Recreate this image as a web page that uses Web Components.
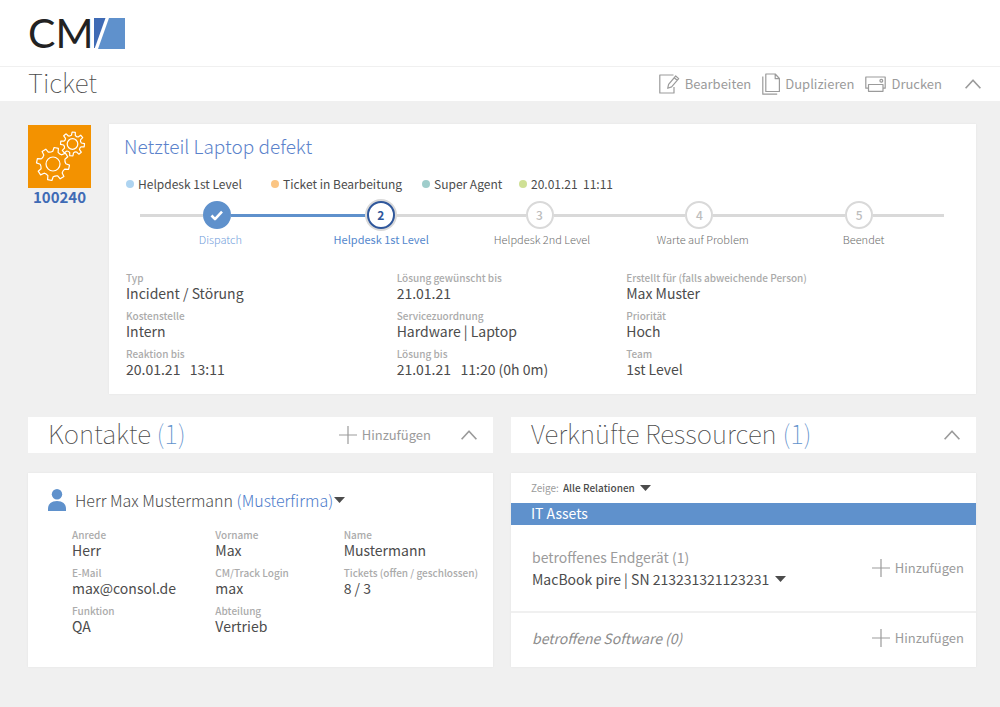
<!DOCTYPE html>
<html lang="de">
<head>
<meta charset="utf-8">
<meta name="viewport" content="width=device-width, initial-scale=1">
<title>Ticket 100240</title>
<style>
  :root {
    --blue: #5f91cc;
    --blue-dark: #3f6bb5;
    --link: #5b82cb;
    --text: #4c4c4c;
    --muted: #9b9b9b;
    --label: #ababab;
    --line: #d9d9d9;
    --page: #f0f0f0;
  }
  body {
    margin: 0;
    background: var(--page);
    color: var(--text);
    font: 14px/18px "Noto Sans CJK SC", "Noto Sans", sans-serif;
  }
</style>
</head>
<body>
<cm-app></cm-app>

<script>
const define = (name, html, setup) => {
  const template = document.createElement('template');
  template.innerHTML = html;
  customElements.define(name, class extends HTMLElement {
    constructor() {
      super();
      this.attachShadow({ mode: 'open' }).append(template.content.cloneNode(true));
    }
    connectedCallback() {
      if (setup && !this.ready) setup(this, this.shadowRoot);
      this.ready = true;
    }
  });
};

/* Outline of a gear wheel with rounded teeth */
const gear = (cx, cy, outer, inner, teeth, turn) => {
  const step = Math.PI * 2 / teeth;
  const at = (r, a) => (cx + r * Math.cos(a)).toFixed(1) + ' ' + (cy + r * Math.sin(a)).toFixed(1);
  let d = '';
  for (let i = 0; i < teeth; i++) {
    const a = turn + i * step;
    d += (i ? 'L' : 'M') + at(inner, a - step * .27) + 'L' + at(outer, a - step * .17)
       + 'L' + at(outer, a + step * .17) + 'L' + at(inner, a + step * .27)
       + 'Q' + at(inner - 1, a + step * .5) + ' ' + at(inner, a + step * .73);
  }
  return d + 'Z';
};

const ICONS = {
  edit: [21, 20, '<path d="M14.5 1H.8v18H15v-6"/><path d="M8.7 14.3l.9-4L16.7 2l3 2.6-7.1 8.3zM15.2 3.8l3 2.5"/>'],
  copy: [18, 22, '<path d="M3.8 1h9.4l4.2 4.5v13H3.8zM13.2 1v4.7h4.2M.8 3.5v17.7h14.4"/>'],
  print: [21, 16, '<path d="M3.3 12.2H.8V1h19.4v11.2h-2.2"/><path d="M3.5 8.5h14.5v6.8H3.5z"/><circle cx="16.3" cy="4.8" r="1.4"/>'],
  up: [16, 10, '<path d="M.6 9.3L8 1.2l7.4 8.1" stroke-width="1.7"/>'],
  plus: [18, 18, '<path d="M9 0v18M0 9h18"/>'],
  down: [11, 6, '<path d="M0 0h11L5.5 6z" fill="currentColor" stroke="none"/>'],
  check: [14, 11, '<path d="M1.5 5.5l3.5 3.6 7-7.5" stroke-width="2.6"/>'],
  user: [18, 22, '<g fill="currentColor" stroke="none"><circle cx="9" cy="5.2" r="5.2"/><path d="M0 22v-2.5C0 15 3.5 12 9 12s9 3 9 7.5V22z"/></g>'],
  gears: [63, 63, `<path d="${gear(25, 39, 16.5, 12.8, 8, .2)}"/><circle cx="25" cy="39" r="7"/>
    <path d="${gear(44.5, 19, 12, 9, 8, .1)}"/><circle cx="44.5" cy="19" r="5.3"/>`]
};

define('cm-icon', `
  <style>
    :host { display: inline-flex; flex: none; }
    svg { display: block; fill: none; stroke: currentColor; stroke-width: 1.2; stroke-linejoin: round; }
  </style>
  <svg aria-hidden="true"></svg>`, (host, root) => {
  const [w, h, body] = ICONS[host.getAttribute('name')];
  const svg = root.querySelector('svg');
  svg.setAttribute('width', w);
  svg.setAttribute('height', h);
  svg.setAttribute('viewBox', `0 0 ${w} ${h}`);
  svg.innerHTML = body;
});

define('cm-action', `
  <style>
    :host { display: inline-flex; }
    button {
      display: flex; align-items: center; gap: 5px; padding: 0; border: 0;
      background: none; color: var(--action-color, var(--muted));
      font: inherit; font-size: 13px; line-height: 20px; cursor: pointer; white-space: nowrap;
    }
  </style>
  <button type="button"><slot></slot></button>`, (host, root) => {
  const button = root.querySelector('button');
  const icon = document.createElement('cm-icon');
  icon.setAttribute('name', host.getAttribute('icon'));
  button.prepend(icon);
  if (host.hasAttribute('hint')) button.setAttribute('aria-label', host.getAttribute('hint'));
});

define('cm-logo', `
  <style>
    :host { display: flex; align-items: center; gap: 1px; color: #222; }
    span { font: 41px/44px Lato, sans-serif; }
    svg { display: block; }
  </style>
  <span>CM</span>
  <svg width="31" height="31" viewBox="0 0 31 31" aria-hidden="true">
    <path fill="#3f6bb5" d="M0 0h11.5L.8 30H0z"/><path fill="#5f91cc" d="M15 0h16v31H4z"/>
  </svg>`);

define('cm-header', `
  <style>
    :host { display: block; background: #fff; }
    .brand { display: flex; align-items: center; height: 66px; padding: 0 28px; border-bottom: 1px solid var(--page); }
    .bar { display: flex; align-items: center; justify-content: space-between; height: 34px; padding: 0 19px 0 28px; }
    h1 { margin: 0; padding-bottom: 4px; font-size: 26px; line-height: 30px; font-weight: 100; }
    nav { display: flex; align-items: center; gap: 11px; }
    .fold { margin-left: 12px; }
  </style>
  <div class="brand"><cm-logo></cm-logo></div>
  <div class="bar">
    <h1>Ticket</h1>
    <nav>
      <cm-action icon="edit">Bearbeiten</cm-action>
      <cm-action icon="copy">Duplizieren</cm-action>
      <cm-action icon="print">Drucken</cm-action>
      <cm-action class="fold" icon="up" hint="Einklappen"></cm-action>
    </nav>
  </div>`);

define('cm-card', `
  <style>
    :host { display: block; background: #fff; box-shadow: 0 0 2px rgba(0, 0, 0, .06); }
  </style>
  <slot></slot>`);

define('cm-field', `
  <style>
    :host { display: block; min-width: 0; }
    .label { font-size: 10px; line-height: 14px; font-weight: 500; color: var(--label); white-space: nowrap; }
    .value { font-size: 14px; line-height: 16px; white-space: pre; }
  </style>
  <div class="label"></div>
  <div class="value"><slot></slot></div>`, (host, root) => {
  root.querySelector('.label').textContent = host.getAttribute('label');
});

define('cm-state', `
  <style>
    :host { display: flex; align-items: center; gap: 4px; font-size: 12px; line-height: 18px; white-space: pre; }
    i { width: 8px; height: 8px; border-radius: 50%; background: var(--dot); }
  </style>
  <i></i><span><slot></slot></span>`);

define('cm-progress', `
  <style>
    :host { display: block; }
    .track { display: flex; align-items: center; height: 32px; }
    .seg { height: 3px; background: var(--line); flex: var(--w) 1 0; }
    .seg.done { background: var(--blue); }
    .node {
      box-sizing: border-box; display: grid; place-items: center; flex: none;
      width: 28px; height: 28px; border: 2px solid var(--line); border-radius: 50%;
      color: #bdbdbd; background: #fff; font-size: 12px; line-height: 16px; font-weight: 500;
    }
    .node.done { background: var(--blue); border-color: var(--blue); color: #fff; }
    .node.now { border-color: #2f579b; color: #2f579b; font-weight: 700; margin: 0 1px; box-shadow: 0 0 0 2px var(--line); }
    .names { display: grid; grid-template-columns: repeat(5, 1fr); text-align: center;
      font-size: 11px; line-height: 16px; font-weight: 300; color: #6d6d6d; }
    .names .done { color: #6f9ddb; }
    .names .now { color: #5487cd; font-weight: 400; }
  </style>
  <div class="track">
    <div class="seg" style="--w:63"></div><div class="node done"><cm-icon name="check"></cm-icon></div>
    <div class="seg done" style="--w:135"></div><div class="node now">2</div>
    <div class="seg" style="--w:130"></div><div class="node">3</div>
    <div class="seg" style="--w:132"></div><div class="node">4</div>
    <div class="seg" style="--w:132"></div><div class="node">5</div>
    <div class="seg" style="--w:71"></div>
  </div>
  <div class="names">
    <span class="done">Dispatch</span><span class="now">Helpdesk 1st Level</span><span>Helpdesk 2nd Level</span><span>Warte auf Problem</span><span>Beendet</span>
  </div>`);

define('cm-ticket', `
  <style>
    :host { display: grid; grid-template-columns: 63px 1fr; gap: 18px; align-items: start; }
    .tile { display: block; background: #f39200; color: #fff; margin-top: 1px; }
    .id { text-align: center; font-size: 15px; line-height: 18px; font-weight: 700; color: var(--blue-dark); }
    cm-card { padding: 9px 16px 17px 15px; }
    h2 { margin: 0; font-size: 19px; line-height: 26px; font-weight: 300; color: var(--link); }
    .states { display: grid; grid-template-columns: 145px 151px 97px auto; margin: 16px 0 6px 2px; }
    cm-progress { margin: 0 16px; }
    .fields { display: grid; grid-template-columns: 270fr 229fr 333fr; gap: 8px 0; margin: 24px 0 0 2px; }
  </style>
  <div><cm-icon class="tile" name="gears"></cm-icon><div class="id">100240</div></div>
  <cm-card>
    <h2>Netzteil Laptop defekt</h2>
    <div class="states">
      <cm-state style="--dot:#aed4f1">Helpdesk 1st Level</cm-state>
      <cm-state style="--dot:#fbc583">Ticket in Bearbeitung</cm-state>
      <cm-state style="--dot:#9fcdcb">Super Agent</cm-state>
      <cm-state style="--dot:#cfe095">20.01.21  11:11</cm-state>
    </div>
    <cm-progress></cm-progress>
    <div class="fields">
      <cm-field label="Typ">Incident / Störung</cm-field>
      <cm-field label="Lösung gewünscht bis">21.01.21</cm-field>
      <cm-field label="Erstellt für (falls abweichende Person)">Max Muster</cm-field>
      <cm-field label="Kostenstelle">Intern</cm-field>
      <cm-field label="Servicezuordnung">Hardware | Laptop</cm-field>
      <cm-field label="Priorität">Hoch</cm-field>
      <cm-field label="Reaktion bis">20.01.21   13:11</cm-field>
      <cm-field label="Lösung bis">21.01.21   11:20 (0h 0m)</cm-field>
      <cm-field label="Team">1st Level</cm-field>
    </div>
  </cm-card>`);

define('cm-section-bar', `
  <style>
    :host { display: flex; align-items: center; height: 36px; padding: 0 16px 0 20px; background: #fff; }
    h2 { flex: 1; margin: 0; padding-bottom: 4px; font-size: 26px; line-height: 32px; font-weight: 100; white-space: nowrap; }
    b { font-weight: 100; color: var(--blue); }
    .fold { margin-left: 30px; }
  </style>
  <h2><span></span> <b></b></h2>
  <slot></slot>
  <cm-action class="fold" icon="up" hint="Einklappen"></cm-action>`, (host, root) => {
  root.querySelector('h2 span').textContent = host.getAttribute('heading');
  root.querySelector('b').textContent = `(${host.getAttribute('count')})`;
});

define('cm-contacts', `
  <style>
    :host { display: flex; flex-direction: column; gap: 20px; }
    cm-card { flex: 1; padding: 14px 20px 33px; }
    .person { display: flex; align-items: center; height: 26px; }
    .person > cm-icon { color: var(--blue); margin-right: 9px; }
    h3 { margin: 0; font-size: 16px; line-height: 26px; font-weight: 300; white-space: nowrap; }
    a { color: #4b7bcb; text-decoration: none; }
    .person cm-action { --action-color: var(--text); margin-left: 1px; }
    .fields { display: grid; grid-template-columns: 143fr 128fr 129fr; gap: 8px 0; margin: 15px 0 0 24px; }
  </style>
  <cm-section-bar heading="Kontakte" count="1"><cm-action icon="plus">Hinzufügen</cm-action></cm-section-bar>
  <cm-card>
    <div class="person">
      <cm-icon name="user"></cm-icon>
      <h3>Herr Max Mustermann <a href="#firma">(Musterfirma)</a></h3>
      <cm-action icon="down" hint="Kontaktmenü"></cm-action>
    </div>
    <div class="fields">
      <cm-field label="Anrede">Herr</cm-field>
      <cm-field label="Vorname">Max</cm-field>
      <cm-field label="Name">Mustermann</cm-field>
      <cm-field label="E-Mail">max@consol.de</cm-field>
      <cm-field label="CM/Track Login">max</cm-field>
      <cm-field label="Tickets (offen / geschlossen)">8 / 3</cm-field>
      <cm-field label="Funktion">QA</cm-field>
      <cm-field label="Abteilung">Vertrieb</cm-field>
    </div>
  </cm-card>`);

define('cm-resources', `
  <style>
    :host { display: flex; flex-direction: column; gap: 20px; }
    cm-card { flex: 1; }
    .filter { display: flex; align-items: center; gap: 4px; height: 30px; padding: 0 20px; font-size: 10px; line-height: 14px; font-weight: 400; color: var(--muted); }
    .select { display: grid; align-items: center; }
    .select > * { grid-area: 1 / 1; }
    .select cm-icon { justify-self: end; color: var(--text); pointer-events: none; }
    select { appearance: none; border: 0; margin: 0; padding: 0 16px 0 0; background: none; color: var(--text); font: inherit; font-weight: 500; }
    h3 { margin: 0; padding: 0 20px 2px; background: var(--blue); color: #fff; font-size: 14px; line-height: 20px; font-weight: 400; }
    .row { display: flex; align-items: center; justify-content: space-between; padding: 0 12px 0 21px; height: 86px; }
    .row + .row { height: 50px; border-top: 2px solid var(--page); }
    .kind { line-height: 22px; color: var(--muted); }
    .item { display: flex; align-items: center; gap: 6px; line-height: 22px; }
    .item cm-action { --action-color: var(--text); }
    em { color: #8c8c8c; }
  </style>
  <cm-section-bar heading="Verknüfte Ressourcen" count="1"></cm-section-bar>
  <cm-card>
    <div class="filter">
      <label for="relation">Zeige:</label>
      <span class="select"><select id="relation"><option>Alle Relationen</option></select><cm-icon name="down"></cm-icon></span>
    </div>
    <h3>IT Assets</h3>
    <div class="row">
      <div>
        <div class="kind">betroffenes Endgerät (1)</div>
        <div class="item">MacBook pire | SN 213231321123231<cm-action icon="down" hint="Gerätemenü"></cm-action></div>
      </div>
      <cm-action icon="plus">Hinzufügen</cm-action>
    </div>
    <div class="row">
      <em>betroffene Software (0)</em>
      <cm-action icon="plus">Hinzufügen</cm-action>
    </div>
  </cm-card>`);

define('cm-app', `
  <style>
    :host { display: block; }
    main { display: grid; gap: 23px; padding: 23px 24px 40px 28px; }
    .columns { display: grid; grid-template-columns: 1fr 1fr; gap: 18px; }
  </style>
  <cm-header></cm-header>
  <main>
    <cm-ticket></cm-ticket>
    <div class="columns"><cm-contacts></cm-contacts><cm-resources></cm-resources></div>
  </main>`);
</script>
</body>
</html>
